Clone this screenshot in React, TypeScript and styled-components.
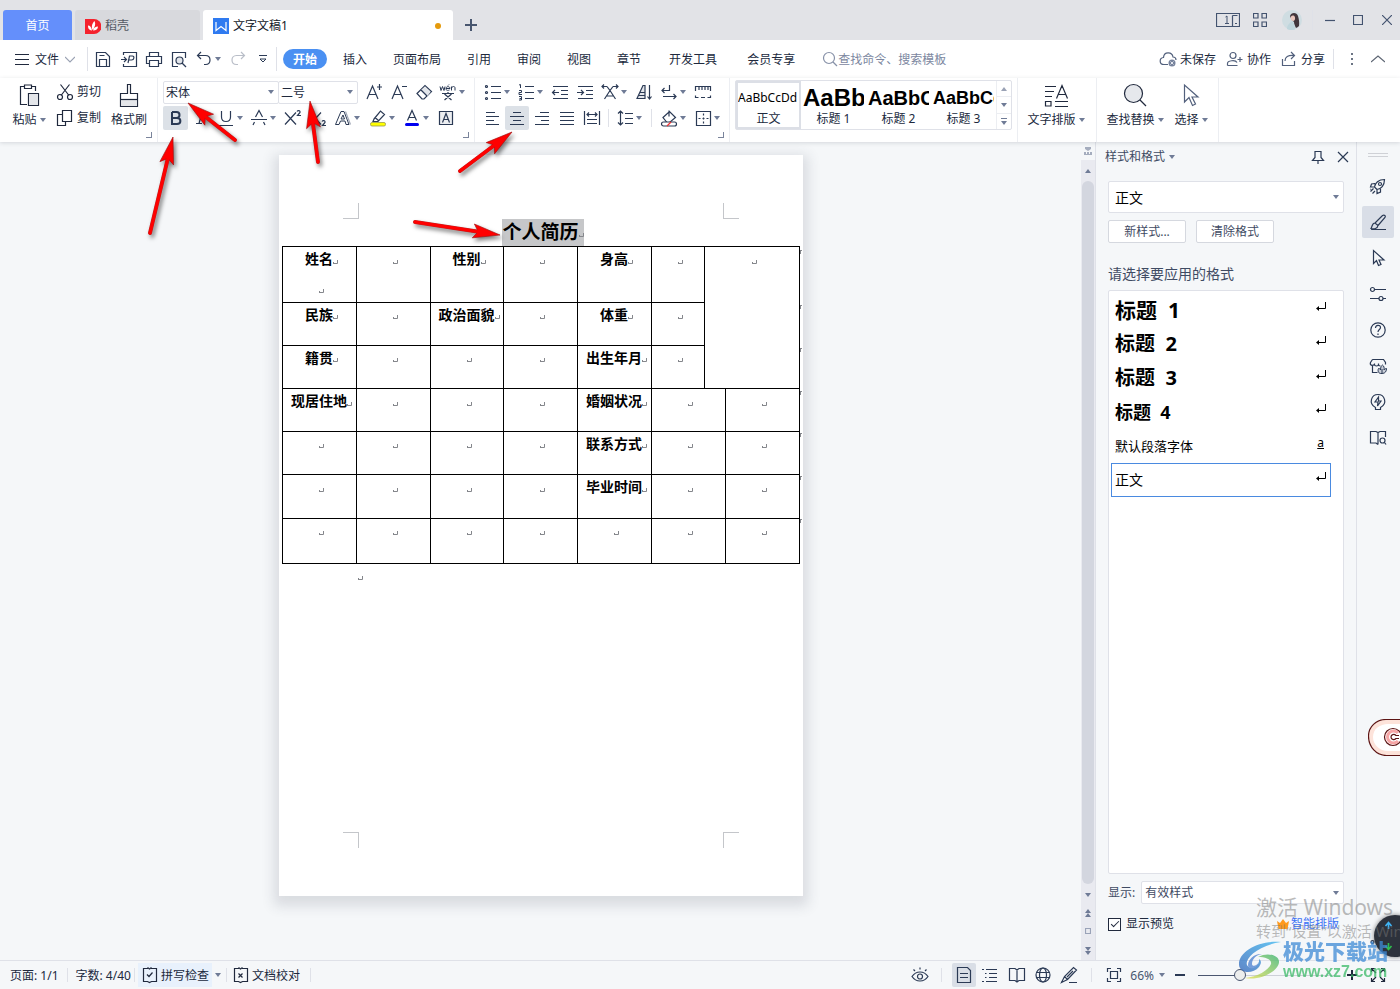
import React from "react";
import styled, { createGlobalStyle, css } from "styled-components";

const sans = `"Noto Sans", "Noto Sans CJK SC", sans-serif`;
const ink = "#2b3a55";
const line = "#dfe1e8";

const GlobalStyle = createGlobalStyle`
  *, *::before, *::after { box-sizing: border-box; }
  body { margin: 0; font-family: ${sans}; font-size: 12px; line-height: 16px; color: #20293d; background: #f5f7f9; }
  button, input, select { font: inherit; color: inherit; }
  button { border: 0; padding: 0; background: none; }
  p, h1, h2 { margin: 0; font-weight: inherit; font-size: inherit; }
  ul { margin: 0; padding: 0; list-style: none; }
`;

/* ---------- shared parts ---------- */

const Svg = styled.svg`
  display: block;
  flex: none;
  fill: none;
  stroke: currentColor;
  stroke-width: 1.2;
`;

function Icon({ size = 18, children }: { size?: number; children: React.ReactNode }) {
  return (
    <Svg width={size} height={size} viewBox={`0 0 ${size} ${size}`} aria-hidden>
      {children}
    </Svg>
  );
}

const CaretSvg = styled.svg`
  display: block;
  flex: none;
  fill: #6f7b96;
`;

function Caret() {
  return (
    <CaretSvg width="6" height="4" viewBox="0 0 6 4" aria-hidden>
      <path d="M0 0h6L3 4z" />
    </CaretSvg>
  );
}

const Divider = styled.span<{ $h: number; $mx?: number }>`
  flex: none;
  width: 1px;
  height: ${(p) => p.$h}px;
  margin: 0 ${(p) => p.$mx ?? 0}px;
  background: ${line};
`;

const Spacer = styled.div`
  flex: 1;
`;

const GapBox = styled.span<{ $w: number }>`
  flex: none;
  width: ${(p) => p.$w}px;
`;

/* ---------- window frame ---------- */

const Window = styled.div`
  position: relative;
  display: flex;
  flex-direction: column;
  min-height: 100vh;
  overflow: hidden;
`;

const TitleBar = styled.header`
  display: flex;
  align-items: flex-end;
  gap: 3px;
  height: 40px;
  padding-left: 3px;
  background: #e2e3e7;
`;

const FileTab = styled.button<{ $w: number; $kind: "home" | "idle" | "active" }>`
  display: flex;
  align-items: center;
  gap: 4px;
  width: ${(p) => p.$w}px;
  height: 30px;
  padding: 2px 12px 0 10px;
  border-radius: 3px 3px 0 0;
  ${(p) =>
    p.$kind === "home"
      ? css`justify-content: center; padding: 2px 0 0; background: #648ffb; color: #fff;`
      : p.$kind === "idle"
        ? css`background: #d8d9dd; color: #555a64;`
        : css`background: #fff; color: #111827;`}
`;

const UnsavedDot = styled.span`
  width: 6px;
  height: 6px;
  margin-left: auto;
  border-radius: 50%;
  background: #e59a0c;
`;

const NewTab = styled.button`
  display: grid;
  place-items: center;
  width: 30px;
  height: 30px;
  color: #48566f;
`;

const WindowTools = styled.div`
  display: flex;
  align-items: center;
  align-self: flex-start;
  height: 40px;
  margin-left: auto;
  color: #43536f;
`;

const WindowButton = styled.button<{ $w: number }>`
  display: grid;
  place-items: center;
  width: ${(p) => p.$w}px;
  height: 40px;
`;

/* ---------- menu row ---------- */

const MenuBar = styled.nav`
  display: flex;
  align-items: center;
  height: 38px;
  padding: 0 9px 0 15px;
  background: #fff;
`;

const FileMenu = styled.button`
  display: flex;
  align-items: center;
  gap: 6px;
  width: 70px;
`;

const MenuText = styled.span`
  padding-top: 2px;
`;

const QuickButton = styled.button<{ $w: number; $dim?: boolean }>`
  display: flex;
  align-items: center;
  justify-content: center;
  gap: 2px;
  width: ${(p) => p.$w}px;
  height: 24px;
  color: ${(p) => (p.$dim ? "#b9bec8" : ink)};
`;

const MenuTab = styled.button<{ $active?: boolean; $pad?: number }>`
  height: 20px;
  padding: 2px ${(p) => p.$pad ?? 13}px 0;
  border-radius: 10px;
  white-space: nowrap;
  ${(p) =>
    p.$active &&
    css`margin: 0 3px 0 6px; padding: 2px 10px 0; background: #4a90f2; color: #fff; font-weight: 700;`}
`;

const Search = styled.label`
  display: flex;
  align-items: center;
  width: 160px;
  margin-left: 12px;
  color: #8791a8;
`;

const SearchInput = styled.input`
  width: 140px;
  padding: 2px 0 0;
  border: 0;
  outline: 0;
  background: none;
  &::placeholder { color: #7c87a0; opacity: 1; }
`;

const CloudAction = styled.button<{ $ml?: number }>`
  display: flex;
  align-items: center;
  gap: 3px;
  margin-left: ${(p) => p.$ml ?? 0}px;
  white-space: nowrap;
  svg { color: #52607c; }
`;

/* ---------- ribbon ---------- */

const Ribbon = styled.section`
  position: relative;
  z-index: 2;
  display: flex;
  height: 64px;
  background: #fff;
  box-shadow: 0 1px 4px rgba(60, 70, 90, 0.18);
`;

const Group = styled.div<{ $w?: number; $pl?: number }>`
  position: relative;
  display: flex;
  flex: none;
  width: ${(p) => (p.$w ? `${p.$w}px` : "auto")};
  padding: 2px 0 0 ${(p) => p.$pl ?? 5}px;
  border-right: 1px solid #eceef2;
`;

const Launcher = styled.button`
  position: absolute;
  right: 5px;
  bottom: 4px;
  width: 6px;
  height: 6px;
  border: solid #7a849b;
  border-width: 0 1px 1px 0;
`;

const BigTool = styled.button<{ $w: number }>`
  display: flex;
  flex-direction: column;
  align-items: center;
  width: ${(p) => p.$w}px;
  padding-top: 2px;
  white-space: nowrap;
  color: #20293d;
`;

const BigLabel = styled.span`
  display: flex;
  align-items: center;
  gap: 3px;
  margin-top: 4px;
`;

const Rows = styled.div`
  display: flex;
  flex-direction: column;
  gap: 2px;
`;

const Row = styled.div`
  display: flex;
  align-items: center;
  height: 24px;
`;

const LabelTool = styled.button`
  display: flex;
  align-items: center;
  gap: 3px;
  height: 24px;
  white-space: nowrap;
`;

const LabelIcon = styled.span`
  display: block;
  margin-left: 10px;
`;

const Tool = styled.button<{ $w: number; $active?: boolean }>`
  display: flex;
  flex: none;
  align-items: center;
  justify-content: center;
  gap: 2px;
  width: ${(p) => p.$w}px;
  height: 24px;
  border-radius: 2px;
  color: ${ink};
  background: ${(p) => (p.$active ? "#dce1e7" : "none")};
`;

const SelectBox = styled.span<{ $w?: number; $h: number }>`
  position: relative;
  display: block;
  flex: ${(p) => (p.$w ? "none" : 1)};
  width: ${(p) => (p.$w ? `${p.$w}px` : "auto")};
  height: ${(p) => p.$h}px;
  & + & { margin-left: -1px; }
  svg { position: absolute; top: 50%; right: 5px; margin-top: -2px; pointer-events: none; }
`;

const Select = styled.select<{ $size?: number; $pl?: number }>`
  width: 100%;
  height: 100%;
  padding: 1px 16px 0 ${(p) => p.$pl ?? 2}px;
  border: 1px solid ${line};
  border-radius: 2px;
  outline: 0;
  appearance: none;
  background: #fff;
  font-size: ${(p) => p.$size ?? 12}px;
`;

const Gallery = styled.div`
  display: flex;
  height: 50px;
  border: 1px solid ${line};
  border-radius: 2px;
`;

const StyleCard = styled.button<{ $active?: boolean }>`
  display: flex;
  flex-direction: column;
  align-items: center;
  width: 65px;
  height: 48px;
  border: 2px solid ${(p) => (p.$active ? "#dcdfe6" : "transparent")};
`;

const Sample = styled.span<{ $size: number; $bold?: boolean; $arial?: boolean }>`
  width: 61px;
  height: 29px;
  overflow: hidden;
  text-align: left;
  white-space: nowrap;
  line-height: 30px;
  color: #000;
  font-family: ${(p) => (p.$arial ? `"Liberation Sans", sans-serif` : sans)};
  font-size: ${(p) => p.$size}px;
  font-weight: ${(p) => (p.$bold ? 700 : 400)};
`;

const GalleryScroll = styled.div`
  display: flex;
  flex-direction: column;
  width: 15px;
  border-left: 1px solid #eceef2;
`;

const GalleryStep = styled.button`
  display: grid;
  flex: 1;
  place-items: center;
  & + & { border-top: 1px solid #eceef2; }
`;

/* ---------- workspace ---------- */

const Workspace = styled.main`
  display: flex;
  flex: 1;
`;

const Canvas = styled.div`
  display: flex;
  flex: 1;
  justify-content: center;
  align-items: flex-start;
  padding: 13px 0 64px;
`;

const Page = styled.article`
  display: flex;
  flex-direction: column;
  width: 524px;
  aspect-ratio: 524 / 741;
  padding: 48px 0;
  background: #fff;
  box-shadow: 0 5px 12px 5px rgba(50, 60, 80, 0.14);
`;

const CropRow = styled.div`
  display: flex;
  flex: none;
  justify-content: space-between;
  padding: 0 64px;
`;

const Crop = styled.span<{ $top?: boolean; $left?: boolean }>`
  width: 16px;
  height: 16px;
  border: 0 solid #c4c6ca;
  border-${(p) => (p.$top ? "bottom" : "top")}-width: 1px;
  border-${(p) => (p.$left ? "right" : "left")}-width: 1px;
`;

const DocTitle = styled.h1`
  display: flex;
  align-items: center;
  align-self: center;
  height: 27px;
  margin-left: 5px;
  background: #c6c7c9;
  color: #000;
  font-size: 19px;
  font-weight: 600;
  line-height: 27px;
  white-space: nowrap;
`;

const TableRow = styled.div`
  display: flex;
  padding: 0 0 0 3px;
`;

const Resume = styled.table`
  flex: none;
  width: 518px;
  border-collapse: collapse;
  table-layout: fixed;
  color: #000;
  font-size: 14px;
  font-weight: 700;
  line-height: 24px;
`;

const Cell = styled.td`
  padding: 0;
  border: 1px solid #000;
  vertical-align: top;
  text-align: center;
  white-space: nowrap;
`;

const CellLine = styled.p`
  display: flex;
  align-items: center;
  justify-content: center;
  height: 24px;
  padding-left: 5px;
  & + & { margin-top: 5px; }
`;

const MarkSvg = styled.svg`
  display: block;
  flex: none;
  margin-top: 6px;
  fill: none;
  stroke: #85878c;
`;

const RowEnds = styled.div`
  flex: 1;
  padding-top: 4px;
  overflow: hidden;
`;

const RowEnd = styled.span<{ $h: number }>`
  display: block;
  height: ${(p) => p.$h}px;
  &::before { content: ""; display: block; width: 2px; height: 4px; border: solid #85878c; border-width: 1px 0 0 1px; }
`;

const AfterTable = styled.p`
  height: 20px;
  padding: 6px 0 0 79px;
`;

const ScrollColumn = styled.div`
  display: flex;
  flex-direction: column;
  align-items: center;
  width: 14px;
  color: #9aa3b8;
`;

const RulerToggle = styled.button`
  display: grid;
  place-items: center;
  width: 14px;
  height: 18px;
`;

const Track = styled.div`
  display: flex;
  flex: 1;
  flex-direction: column;
  align-items: center;
  width: 14px;
  background: #e9eaf0;
`;

const TrackButton = styled.button<{ $h: number }>`
  display: grid;
  place-items: center;
  width: 14px;
  height: ${(p) => p.$h}px;
`;

const Thumb = styled.div`
  flex: 1;
  width: 12px;
  border-radius: 6px;
  background: #d3d6df;
`;

/* ---------- styles panel ---------- */

const Panel = styled.aside`
  display: flex;
  flex-direction: column;
  width: 262px;
  padding: 0 12px;
  border: solid ${line};
  border-width: 0 1px;
  color: #3f4b63;
`;

const PanelHead = styled.div`
  display: flex;
  align-items: center;
  height: 30px;
  margin: 0 -5px 0 -3px;
  gap: 4px;
`;

const PanelButton = styled.button<{ $ml: string }>`
  margin-left: ${(p) => p.$ml};
  color: ${ink};
`;

const PanelSelect = styled.div`
  display: flex;
  margin-top: 9px;
  color: #000;
`;

const ButtonRow = styled.div`
  display: flex;
  gap: 10px;
  margin-top: 7px;
`;

const PlainButton = styled.button`
  width: 78px;
  height: 23px;
  padding-top: 1px;
  border: 1px solid #d5d8df;
  border-radius: 2px;
  background: #fff;
`;

const Prompt = styled.h2`
  margin-top: 21px;
  font-size: 14px;
  line-height: 20px;
`;

const StyleList = styled.ul`
  flex: 1;
  margin-top: 6px;
  padding: 2px 12px 2px 2px;
  border: 1px solid ${line};
  border-radius: 2px;
  background: #fff;
  color: #000;
`;

const StyleItem = styled.li<{ $size: number; $bold?: boolean; $selected?: boolean }>`
  display: flex;
  justify-content: space-between;
  height: 34px;
  padding: 0 4px 0 3px;
  border: 1px solid ${(p) => (p.$selected ? "#4a8ae0" : "transparent")};
  font-size: ${(p) => p.$size}px;
  font-weight: ${(p) => (p.$bold ? 700 : 400)};
  line-height: 32px;
  white-space: pre;
`;

const ItemMark = styled.span`
  padding: 8px 0 0;
`;

const CharMark = styled.span`
  padding-right: 2px;
  font-size: 12px;
  line-height: 26px;
  text-decoration: underline;
`;

const ShowRow = styled.label`
  display: flex;
  align-items: center;
  gap: 6px;
  margin-top: 7px;
  white-space: nowrap;
`;

const PreviewRow = styled.div`
  display: flex;
  align-items: center;
  justify-content: space-between;
  height: 20px;
  margin: 10px 0 26px;
`;

const CheckLabel = styled.label`
  display: flex;
  align-items: center;
  gap: 5px;
  color: #20293d;
`;

const CheckBox = styled.input`
  display: grid;
  place-items: center;
  width: 13px;
  height: 13px;
  margin: 0;
  border: 1px solid #20293d;
  appearance: none;
  background: #fff;
  &:checked::before { content: ""; width: 8px; height: 4px; border: solid #20293d; border-width: 0 0 1px 1px; transform: translateY(-1px) rotate(-45deg); }
`;

const SmartLink = styled.a`
  display: flex;
  align-items: center;
  gap: 2px;
  margin-right: 5px;
  color: #3c72f5;
  text-decoration: none;
`;

const Rail = styled.aside`
  display: flex;
  flex-direction: column;
  align-items: center;
  width: 43px;
  padding: 11px 2px 0 0;
`;

const Grip = styled.span`
  width: 20px;
  height: 4px;
  margin-bottom: 13px;
  border: solid #cfd1d6;
  border-width: 1px 0;
`;

const RailButton = styled.button<{ $active?: boolean }>`
  display: grid;
  place-items: center;
  width: 32px;
  height: 32px;
  margin-bottom: 4px;
  border-radius: 2px;
  color: ${ink};
  background: ${(p) => (p.$active ? "#d9dee7" : "none")};
`;

const RailMore = styled.button`
  margin: auto 0 10px;
  color: ${ink};
`;

/* ---------- status bar ---------- */

const StatusBar = styled.footer`
  display: flex;
  align-items: center;
  height: 29px;
  padding: 0 14px 0 10px;
  border-top: 1px solid ${line};
  color: #20293d;
  white-space: nowrap;
`;

const StatusText = styled.span`
  padding-top: 2px;
`;

const StatusButton = styled.button<{ $tint?: boolean }>`
  display: flex;
  align-items: center;
  gap: 2px;
  height: 24px;
  padding: 0 3px;
  background: ${(p) => (p.$tint ? "#e8f1fc" : "none")};
`;

const ZoomValue = styled.span`
  margin-right: 3px;
  padding-top: 1px;
  color: #48566f;
`;

const ViewButton = styled.button<{ $active?: boolean; $w: number }>`
  display: grid;
  place-items: center;
  width: ${(p) => p.$w}px;
  height: 24px;
  border-radius: 2px;
  color: ${ink};
  background: ${(p) => (p.$active ? "#d9dee6" : "none")};
`;

const Zoom = styled.input`
  width: 137px;
  height: 14px;
  margin: 0 12px 0 6px;
  appearance: none;
  background: linear-gradient(to right, #4a5670 32%, #cdd0d8 32%) center / 100% 1px no-repeat;
  &::-webkit-slider-thumb { width: 12px; height: 12px; appearance: none; border: 1px solid #4a5670; border-radius: 50%; background: #eceded; }
`;

/* ---------- floating layers ---------- */

const ArrowLayer = styled.svg`
  position: absolute;
  z-index: 5;
  top: 0;
  left: 0;
  pointer-events: none;
  filter: drop-shadow(2px 3px 2px rgba(0, 0, 0, 0.5));
`;

const Activation = styled.div`
  position: absolute;
  z-index: 6;
  right: 0;
  bottom: 48px;
  width: 144px;
  overflow: hidden;
  color: rgba(120, 120, 120, 0.5);
  font-size: 15px;
  line-height: 20px;
  white-space: nowrap;
  pointer-events: none;
`;

const ActivationTitle = styled.p`
  font-size: 21px;
  line-height: 28px;
`;

const SiteMark = styled.div`
  position: absolute;
  z-index: 6;
  right: 12px;
  bottom: 8px;
  display: flex;
  align-items: center;
  gap: 1px;
  opacity: 0.75;
  pointer-events: none;
`;

const SiteName = styled.p`
  color: #3d8ad6;
  font-size: 21px;
  font-weight: 900;
  line-height: 24px;
  white-space: nowrap;
`;

const SiteUrl = styled.p`
  color: #3cba68;
  font-family: "Liberation Sans", sans-serif;
  font-size: 16px;
  font-weight: 700;
  line-height: 18px;
`;

const SideBadge = styled.button`
  position: absolute;
  z-index: 4;
  top: 719px;
  right: 0;
  width: 32px;
  height: 37px;
`;

const NetBall = styled.button`
  position: absolute;
  z-index: 5;
  right: -16px;
  bottom: 32px;
  width: 42px;
  height: 42px;
  border-radius: 50%;
  background: #2d323c;
  box-shadow: 0 0 5px rgba(0, 0, 0, 0.5);
`;

/* ---------- drawn pieces ---------- */

function ParaMark() {
  return (
    <MarkSvg width="5" height="5" viewBox="0 0 5 5" aria-hidden>
      <path d="M4.500 0v3.500H.500M.500 2v2" />
    </MarkSvg>
  );
}

function EnterMark() {
  return (
    <Svg width="10" height="9" viewBox="0 0 10 9" aria-hidden>
      <path d="M9.500 0v6.500H2" strokeWidth="1" />
      <path d="M0 6.500 3 4v5z" fill="currentColor" stroke="none" />
    </Svg>
  );
}

function Arrow({ tip, tail }: { tip: [number, number]; tail: [number, number] }) {
  const dx = tail[0] - tip[0];
  const dy = tail[1] - tip[1];
  const angle = (Math.atan2(dy, dx) * 180) / Math.PI;
  const length = Math.hypot(dx, dy);
  return (
    <g transform={`translate(${tip[0]} ${tip[1]}) rotate(${angle})`}>
      <path d={`M20 0H${length}`} stroke="#c02020" strokeWidth="4" strokeLinecap="round" />
      <path d="M0 0 27 -7 22 0 27 7z" fill="#f00" stroke="#a01010" strokeWidth=".6" />
      <path d={`M20 0H${length}`} stroke="#f00" strokeWidth="3" strokeLinecap="round" />
    </g>
  );
}

const bullets = (
  <>
    <path d="M7 3.500h10M7 9.500h10M7 15.500h10" />
    <circle cx="2.500" cy="3.500" r="1" />
    <circle cx="2.500" cy="9.500" r="1" />
    <circle cx="2.500" cy="15.500" r="1" />
  </>
);
const numbers = (
  <>
    <path d="M8 3.500h9M8 9.500h9M8 15.500h9" />
    <path d="M2 2l1.500-.5V5M2 7.500h2.500v2H2v2h3M2 13.500h2.500v3.500H2M2.500 15.500h2" strokeWidth="1" />
  </>
);

const bookFrame = <path d="M7 2.500H2.500v13h4l2 1 2-1h5v-13H10M6.500 1.500l2 1.500 2-1.500" />;

const quick = [
  { label: "保存", w: 26, icon: <><path d="M2.500 2.500h9l4 4v10h-13z" /><path d="M5.500 16V9.500h7V16M5.500 5.500h5" /></> },
  { label: "输出为PDF", w: 25, icon: <><path d="M3.500 5V2.500h13v14h-13V14" /><path d="M1 9.500h5M4 7l2.500 2.500L4 12M8 13l1.500-7h3c2 0 2 4-1 4H9" /></> },
  { label: "打印", w: 25, icon: <><path d="M4.500 6V2.500h9V6M4.500 13.500h-3v-7h15v7h-3" /><path d="M4.500 10.500h9v6h-9z" /></> },
  { label: "打印预览", w: 25, icon: <><path d="M8 16.500H2.500v-14h13V8" /><circle cx="9.500" cy="10.500" r="3.500" fill="#e2e5ea" /><path d="M12 13l4 4" /></> },
];

const columns = [74, 74, 73, 74, 74, 53, 21, 74];
const rowHeights = [55, 43, 43, 42, 43, 43, 45];
const rows: string[][] = [
  ["姓名", "", "性别", "", "身高", "", ""],
  ["民族", "", "政治面貌", "", "体重", ""],
  ["籍贯", "", "", "", "出生年月", ""],
  ["现居住地", "", "", "", "婚姻状况", "", ""],
  ["", "", "", "", "联系方式", "", ""],
  ["", "", "", "", "毕业时间", "", ""],
  ["", "", "", "", "", "", ""],
];

const rail = [
  { label: "快速启动", icon: <><path d="M5.500 10C6 6 9.500 2.500 15.500 2.500 15.500 8.500 12 12 8 12.500zM6 6.500l-3.500.5L1.500 10l4 0M11.500 12v3L8 16.500v-4" /><circle cx="11" cy="7" r="1.500" /><path d="M4.500 11.500l-3 3M6 14l-2.500 2.500M2 12l-.5.500" /></> },
  { label: "样式和格式", active: true, icon: <><path d="M2 16.500h15M6 10l7.500-7.500c2-1 3.500.5 2.500 2L9 12.500M6 10c-3 0-2.500 3-4 5.500C5 16 8.500 16 9 12.500z" /></> },
  { label: "选择窗格", icon: <path d="M4.500 1.500v13l3-3 2 5 2.500-1-2-4.500H15z" /> },
  { label: "属性", icon: <><circle cx="3.500" cy="4.500" r="2" /><path d="M5.500 4.500H17M1 13.500h9M14 13.500h3" /><circle cx="12" cy="13.500" r="2" /></> },
  { label: "帮助", icon: <><circle cx="9" cy="9" r="7.200" /><path d="M6.500 7c0-3.500 5-3.500 5-.5 0 2-2.500 2-2.500 4.500M9 12.500V14" /></> },
  { label: "稻壳资源", icon: <><path d="M3.500 9v6.500h5M3.500 2.500h11l2 3v2M3.500 2.500l-2 3c-1 3 2 3.500 4 2V6.500M5.500 7.500c0 2 4 2 4 0v-1M9.500 7.500c0 1 1 1.500 2 1.500" /><path d="M13 16.500c-4 .5-4.500-3-3.500-5 1 0 2 .5 2 1.500 0-3 1-4.500 2-5 1.500 1 2 3 1.500 5 .5-1 1.500-1.500 2.500-1.500 0 2.500-1 5-4.500 5zM13 16V12" fill="#c9ced8" strokeWidth="1" /></> },
  { label: "灵感", icon: <><path d="M6.500 14.500C-1 10 2.500 1.500 9 1.500s10 8.500 2.500 13v2h-5z" /><path d="M9.500 4l-3.500 5h3l-.5 4L12 8H9.500z" /></> },
  { label: "查阅", icon: <><path d="M9 15.500l-2-1.500H1.500V2.500H7l2 1 2-1h5.500V8M9 3.500v12" /><circle cx="13.500" cy="11.500" r="2.500" /><path d="M15.500 13.500l1.500 2" /></> },
];

/* ---------- sections ---------- */

function Title() {
  return (
    <TitleBar>
      <FileTab $kind="home" $w={69}>首页</FileTab>
      <FileTab $kind="idle" $w={125}>
        <Icon size={16}>
          <path d="M0 1h9a7 7 0 0 1 0 15H0z" fill="#f5222d" stroke="none" />
          <path d="M7 12.500C3 12 3 9 3 7.500c2 0 3.500 1.500 4 5zM7.500 12C6 8 7.500 5 9.500 3c1.500 3 .5 6-2 9zM8 12.500c.5-3 2.500-4 5-4 0 2.500-2 4-5 4z" fill="#fff" stroke="none" />
        </Icon>
        稻壳
      </FileTab>
      <FileTab $kind="active" $w={250}>
        <Icon size={16}>
          <rect width="16" height="16" fill="#2f7af0" stroke="none" />
          <path d="M3 4v8.500l5-4 5 4V4" stroke="#fff" strokeWidth="1.200" />
        </Icon>
        文字文稿1
        <UnsavedDot />
      </FileTab>
      <NewTab aria-label="新建">
        <Icon size={12}><path d="M6 0v12M0 6h12" strokeWidth="2" /></Icon>
      </NewTab>
      <WindowTools>
        <WindowButton $w={32} aria-label="窗口切换">
          <Svg width="24" height="14" viewBox="0 0 24 14" aria-hidden>
            <path d="M.500 .500h23v13H.500zM16.500 2.500v11M16.500 2.500h5" />
            <path d="M9.500 4l1.500-1v8M9 10.500h4M19 10.500h2" strokeWidth="1" />
          </Svg>
        </WindowButton>
        <WindowButton $w={32} aria-label="应用">
          <Icon size={14}><path d="M.500 .500h4.500v4.500H.500zM9 .500h4.500v4.500H9zM.500 9h4.500v4.500H.500zM9 9h4.500v4.500H9z" /></Icon>
        </WindowButton>
        <WindowButton $w={32} aria-label="账户">
          <Icon size={20}>
            <circle cx="10" cy="10" r="10" fill="#cfdde2" stroke="none" />
            <path d="M8 6c1-4 7-4 8 0 1 3 1.500 7 1 10-1 1-2 1.500-3 2-1-2-2-4-2-6-2-1-3-3-4-6z" fill="#40363c" stroke="none" />
            <path d="M9 6.500c1-1.500 3.500-1.500 4 1s-1 4-2.500 3.500S8 8.500 9 6.500z" fill="#e7c6bd" stroke="none" />
            <path d="M5 19c0-4 3-7 6-8 1 3 2 6 2 8.500-3 1-6 .5-8-.5z" fill="#bfd6dd" stroke="none" />
          </Icon>
        </WindowButton>
        <Divider $h={20} $mx={4} />
        <WindowButton $w={26} aria-label="最小化"><Icon size={10}><path d="M0 5.500h10" /></Icon></WindowButton>
        <WindowButton $w={30} aria-label="最大化"><Icon size={10}><path d="M.500 .500h9v9h-9z" /></Icon></WindowButton>
        <WindowButton $w={27} aria-label="关闭"><Icon size={10}><path d="M0 0l10 10M10 0L0 10" /></Icon></WindowButton>
      </WindowTools>
    </TitleBar>
  );
}

function Menu() {
  return (
    <MenuBar>
      <FileMenu>
        <Icon size={14}><path d="M0 2.500h14M0 7.500h14M0 12.500h14" strokeWidth="1" /></Icon>
        <MenuText>文件</MenuText>
        <Icon size={10}><path d="M0 3l5 5 5-5" stroke="#9aa2b3" /></Icon>
      </FileMenu>
      <Divider $h={24} $mx={2} />
      {quick.map((q) => (
        <QuickButton key={q.label} $w={q.w} aria-label={q.label}><Icon>{q.icon}</Icon></QuickButton>
      ))}
      <QuickButton $w={34} aria-label="撤销">
        <Icon><path d="M6 2L2.500 5.500 6 9M2.500 5.500h8c6 0 6 9 0 9H9" /></Icon>
        <Caret />
      </QuickButton>
      <QuickButton $w={26} $dim aria-label="恢复">
        <Icon><path d="M12 2l3.500 3.500L12 9M15.500 5.500h-8c-6 0-6 9 0 9H9" /></Icon>
      </QuickButton>
      <QuickButton $w={24} aria-label="更多">
        <Icon size={8}><path d="M0 .500h8M1 4l3 3 3-3z" strokeWidth="1" /></Icon>
      </QuickButton>
      <GapBox $w={1} />
      <Divider $h={24} />
      <MenuTab $active>开始</MenuTab>
      {["插入", "页面布局", "引用", "审阅", "视图", "章节"].map((t) => <MenuTab key={t}>{t}</MenuTab>)}
      {["开发工具", "会员专享"].map((t) => <MenuTab key={t} $pad={15}>{t}</MenuTab>)}
      <Search>
        <Icon size={16}><circle cx="7" cy="7" r="5.500" /><path d="M11 11l4 4" /></Icon>
        <SearchInput type="search" aria-label="查找命令" placeholder="查找命令、搜索模板" />
      </Search>
      <Spacer />
      <CloudAction>
        <Icon><path d="M9 14.500H5c-5 0-5-6.500-.5-7C5 1.500 13 1.500 14 7c2 0 3 1.500 3 3" /><circle cx="13" cy="13" r="3.500" fill="#76829c" stroke="none" /><path d="M11.500 11.500l3 3M14.500 11.500l-3 3" stroke="#fff" strokeWidth=".8" /></Icon>
        <MenuText>未保存</MenuText>
      </CloudAction>
      <CloudAction $ml={10}>
        <Icon><circle cx="7" cy="5.500" r="3" /><path d="M1.500 15.500v-2c0-3 8-4 9.500-1M1.500 15.500h10M11.500 9.500h5M14 7v5" /></Icon>
        <MenuText>协作</MenuText>
      </CloudAction>
      <CloudAction $ml={9}>
        <Icon><path d="M2.500 9v6.500h12V11M5 11c0-4 3-6 9-5.500M11 2l3.500 3.500L11 9" /></Icon>
        <MenuText>分享</MenuText>
      </CloudAction>
      <Divider $h={20} $mx={8} />
      <QuickButton $w={20} aria-label="更多操作">
        <Icon size={14}><path d="M7 1v2M7 6v2M7 11v2" stroke="#6b7484" strokeWidth="2" /></Icon>
      </QuickButton>
      <GapBox $w={3} />
      <QuickButton $w={26} aria-label="收起功能区">
        <Icon size={14}><path d="M0 10l7-6 7 6" stroke="#5d6573" /></Icon>
      </QuickButton>
    </MenuBar>
  );
}

function RibbonBar() {
  return (
    <Ribbon>
      <Group $w={158} $pl={12}>
        <BigTool $w={34}>
          <Icon size={26}><path d="M11 22.500H4.500v-18h4M16 4.500h3.500V9M8.500 3h7v3.500h-7zM12.500 11.500h10v12h-10z" /><path d="M13 12h9v11h-9z" fill="#e4e6ea" stroke="none" /></Icon>
          <BigLabel>粘贴<Caret /></BigLabel>
        </BigTool>
        <Rows>
          <LabelTool>
            <LabelIcon><Icon><path d="M4.500 1.500l8.500 11M13.500 1.500L5 12.500" /><circle cx="4" cy="14" r="2.500" /><circle cx="14" cy="14" r="2.500" /></Icon></LabelIcon>
            剪切
          </LabelTool>
          <LabelTool>
            <LabelIcon><Icon><path d="M6 5.500H1.500v11h8V13M6.500 1.500h9v11h-9z" /></Icon></LabelIcon>
            复制
          </LabelTool>
        </Rows>
        <BigTool $w={56}>
          <Icon size={26}><path d="M11.500 2.500h3v9h7v13h-17v-13h7z" /><path d="M5 17.500h16V24H5z" fill="#e4e6ea" stroke="none" /><path d="M4.500 17.500h17" /></Icon>
          <BigLabel>格式刷</BigLabel>
        </BigTool>
        <Launcher aria-label="剪贴板设置" />
      </Group>

      <Group $w={317}>
        <Rows>
          <Row>
            <SelectBox $w={116} $h={23}><Select aria-label="字体"><option>宋体</option></Select><Caret /></SelectBox>
            <SelectBox $w={80} $h={23}><Select aria-label="字号"><option>二号</option></Select><Caret /></SelectBox>
            <GapBox $w={3} />
            <Tool $w={25} aria-label="增大字号"><Icon><path d="M2 16L7.500 3 13 16M4 11.500h7M14.500 1v6M12 4h5" /></Icon></Tool>
            <Tool $w={25} aria-label="减小字号"><Icon><path d="M2 16L7.500 3 13 16M4 11.500h7M12 3.500h5" /></Icon></Tool>
            <Tool $w={25} aria-label="清除格式"><Icon><path d="M2 10.500L10 2.500l6.500 6-7.500 7.500H7z" /><path d="M6 7l6.500 6 3-4L10 3.500z" fill="#e2e5ea" stroke="none" /><path d="M6 7l6 6" /></Icon></Tool>
            <Tool $w={32} aria-label="拼音指南">
              <Icon><path d="M1 3.500l1 4 1.500-4 1.500 4 1-4M7 5.500h4c0-2.500-4-2.500-4 0s2 2 3.500 1.500M10 1.500L9 2.500M12.500 7.500v-4M12.500 5c1-2 3.500-2 3.500 0v2.500" strokeWidth="1" /><path d="M3 10.500h12M9 9v1.500M5.500 11l7 6M12.500 11l-7 6" /></Icon>
              <Caret />
            </Tool>
          </Row>
          <Row>
            <Tool $w={25} $active aria-label="加粗"><Icon><path d="M5 3v12h5c4.500 0 4.500-6 0-6H5.500M5 3h4.500c4 0 4 6 0 6" strokeWidth="2" /></Icon></Tool>
            <Tool $w={26} aria-label="倾斜"><Icon><path d="M7 3.500h6M4 14.500h6M10 3.500l-3 11" /></Icon></Tool>
            <Tool $w={32} aria-label="下划线"><Icon><path d="M4.500 2v6c0 6 9 6 9 0V2M2 16.500h14" /></Icon><Caret /></Tool>
            <Tool $w={34} aria-label="删除线"><Icon><path d="M5.500 8L9 1.500 12.500 8M1 10.500h16M4.500 13L3 16M13.500 13l1.500 3" /></Icon><Caret /></Tool>
            <Tool $w={26} aria-label="上标"><Icon><path d="M1 3.500l11 12M12 3.500l-11 12" /><path d="M13 2.500c1-1.500 3.500-1 3 1L13.500 6.500h3.500" /></Icon></Tool>
            <Tool $w={24} aria-label="下标"><Icon><path d="M1 3.500l11 12M12 3.500l-11 12" /><path d="M13 12.500c1-1.500 3.500-1 3 1l-2.500 3h3.500" /></Icon></Tool>
            <Tool $w={34} aria-label="文字效果"><Icon><path d="M1.500 15.500L7 2.500h3l5 13h-3L11 12H6.500l-1.500 3.500zM7 10h3.500L9 6z" strokeWidth="1" /><path d="M11.500 2.500l5 13" stroke="#a4abb9" /></Icon><Caret /></Tool>
            <Tool $w={36} aria-label="突出显示"><Icon><path d="M5 10l6.500-8 4 3.500L9 12.500H4zM6 8.500l4 3.500" /><rect x="1.500" y="13.500" width="15" height="3.500" rx="1.500" fill="#ff0" stroke="#9a9a50" strokeWidth=".8" /></Icon><Caret /></Tool>
            <Tool $w={32} aria-label="字体颜色"><Icon><path d="M4.500 11.500L9 1.500l4.500 10M6 8.500h6" /><rect x="2" y="14" width="14" height="3" rx="1.500" fill="#0000f0" stroke="none" /></Icon><Caret /></Tool>
            <Tool $w={28} aria-label="字符底纹"><Icon><path d="M2.500 2.500h13v13h-13z" fill="#eceef1" /><path d="M5.500 13.500L9 4.500l3.500 9M6.500 10.500h5" /></Icon></Tool>
          </Row>
        </Rows>
        <Launcher aria-label="字体设置" />
      </Group>

      <Group $w={255}>
        <Rows>
          <Row>
            <Tool $w={33} aria-label="项目符号"><Icon>{bullets}</Icon><Caret /></Tool>
            <Tool $w={34} aria-label="编号"><Icon>{numbers}</Icon><Caret /></Tool>
            <Tool $w={26} aria-label="减少缩进"><Icon><path d="M2 3.500h15M10 7.500h7M10 11.500h7M2 15.500h15M8 9.500H1.500M4 7L1.500 9.500 4 12" /></Icon></Tool>
            <Tool $w={24} aria-label="增加缩进"><Icon><path d="M2 3.500h15M10 7.500h7M10 11.500h7M2 15.500h15M1 9.500h6.500M5 7l2.500 2.500L5 12" /></Icon></Tool>
            <Tool $w={34} aria-label="中文版式"><Icon><path d="M3.500 16L9 7.500l5.500 8.500M5.500 13h7M1 3.500h5M3 1.500l-2 2 2 2M12 3.500h5M15 1.500l2 2-2 2M6 3.500l3 4 3-4" /></Icon><Caret /></Tool>
            <Tool $w={26} aria-label="排序"><Icon><path d="M2 15.500l6-13h2v13zM5 9.500h5M4 12.500h6" fill="#e2e5ea" /><path d="M14.500 2v14M12.500 13.500l2 2.500 2-2.500" /></Icon></Tool>
            <Tool $w={32} aria-label="显示段落标记"><Icon><path d="M9.500 2v5.500H2M4.500 5L2 7.500 4.500 10M3 13.500h13M13.500 11l2.500 2.500-2.500 2.500" /></Icon><Caret /></Tool>
            <Tool $w={28} aria-label="制表位"><Icon><path d="M1.500 8V3.500h15V8M5 3.500V7M8 3.500V7M11 3.500V7M14 3.500V7M1.500 12.500v2h3M7 14.500h4M13.500 14.500h3v-2" /></Icon></Tool>
          </Row>
          <Row>
            <Tool $w={25} aria-label="左对齐"><Icon><path d="M2 3.500h9M2 7.500h13M2 11.500h8M2 15.500h13" /></Icon></Tool>
            <Tool $w={24} $active aria-label="居中对齐"><Icon><path d="M5 3.500h8M2 7.500h14M5 11.500h8M2 15.500h14" /></Icon></Tool>
            <Tool $w={26} aria-label="右对齐"><Icon><path d="M7 3.500h9M2 7.500h14M8 11.500h8M2 15.500h14" /></Icon></Tool>
            <Tool $w={24} aria-label="两端对齐"><Icon><path d="M2 3.500h14M2 7.500h14M2 11.500h14M2 15.500h14" /></Icon></Tool>
            <Tool $w={26} aria-label="分散对齐"><Icon><path d="M1.500 2v14M16.500 2v14M4 5.500h10M6 3.500l-2 2 2 2M12 3.500l2 2-2 2M4 10.500h10M4 14.500h10" /></Icon></Tool>
            <Divider $h={18} $mx={3} />
            <Tool $w={34} aria-label="行距"><Icon><path d="M4.500 2v14M2 4.500L4.500 2 7 4.500M2 13.500L4.500 16 7 13.500M9 4.500h8M9 9.500h8M9 14.500h8" /></Icon><Caret /></Tool>
            <Divider $h={18} $mx={5} />
            <Tool $w={32} aria-label="底纹颜色"><Icon><path d="M3 8.500L9.500 2.500l6 6-6 5H7zM9 1.500v6" /><rect x="1.500" y="13" width="15" height="4" rx="2" fill="#fff" /><path d="M7 17l4-4" stroke="#e33" /></Icon><Caret /></Tool>
            <Tool $w={36} aria-label="边框"><Icon><path d="M2.500 2.500h14v14h-14z" /><path d="M9.500 4.500v10M4.500 9.500h10" strokeDasharray="2 2" /></Icon><Caret /></Tool>
          </Row>
        </Rows>
        <Launcher aria-label="段落设置" />
      </Group>

      <Group $w={288}>
        <Gallery>
          <StyleCard $active><Sample $size={12}>AaBbCcDd</Sample>正文</StyleCard>
          <StyleCard><Sample $size={24} $bold $arial>AaBbCcDd</Sample>标题 1</StyleCard>
          <StyleCard><Sample $size={20} $bold $arial>AaBbCcDd</Sample>标题 2</StyleCard>
          <StyleCard><Sample $size={18} $bold $arial>AaBbCcDd</Sample>标题 3</StyleCard>
          <GalleryScroll>
            <GalleryStep aria-label="上一行"><CaretSvg width="6" height="4" viewBox="0 0 6 4"><path d="M0 4h6L3 0z" opacity=".7" /></CaretSvg></GalleryStep>
            <GalleryStep aria-label="下一行"><Caret /></GalleryStep>
            <GalleryStep aria-label="展开样式"><CaretSvg width="6" height="7" viewBox="0 0 6 7"><path d="M0 0h6v1H0zM0 3h6L3 7z" /></CaretSvg></GalleryStep>
          </GalleryScroll>
        </Gallery>
      </Group>

      <Group $w={79} $pl={6}>
        <BigTool $w={64}>
          <Icon size={26}><path d="M2 4.500h11M2 9.500h9M2 14.500h7M2.500 19.500h5.500v4.500H2.500zM12 19.500h13M12 24.500h13M13.500 16.500L19 3.500l5.500 13M15.500 12.500h7" /></Icon>
          <BigLabel>文字排版<Caret /></BigLabel>
        </BigTool>
      </Group>

      <Group $w={122} $pl={6}>
        <BigTool $w={64}>
          <Icon size={26}><circle cx="11.500" cy="11.500" r="9" fill="#e6e8ec" /><path d="M18 18l6 6" /></Icon>
          <BigLabel>查找替换<Caret /></BigLabel>
        </BigTool>
        <BigTool $w={48}>
          <Icon size={26}><path d="M6.500 3v17l4.500-4.500 3.500 8 3-1.500-3.500-7H20z" stroke="#52607c" /></Icon>
          <BigLabel>选择<Caret /></BigLabel>
        </BigTool>
      </Group>
    </Ribbon>
  );
}

function Document() {
  return (
    <Canvas>
      <Page>
        <CropRow><Crop $top $left /><Crop $top /></CropRow>
        <DocTitle>个人简历<ParaMark /></DocTitle>
        <TableRow>
          <Resume>
            <colgroup>{columns.map((w, i) => <col key={i} width={w} />)}</colgroup>
            <tbody>
              {rows.map((cells, r) => (
                <tr key={r} style={{ height: rowHeights[r] }}>
                  {cells.map((text, c) => {
                    const photo = r === 0 && c === 6;
                    const wide = photo || (r > 2 && c === 5);
                    return (
                      <Cell key={c} colSpan={wide ? 2 : 1} rowSpan={photo ? 3 : 1}>
                        <CellLine>{text}<ParaMark /></CellLine>
                        {r === 0 && c === 0 && <CellLine><ParaMark /></CellLine>}
                      </Cell>
                    );
                  })}
                </tr>
              ))}
            </tbody>
          </Resume>
          <RowEnds>{rowHeights.map((h, i) => <RowEnd key={i} $h={h} />)}</RowEnds>
        </TableRow>
        <AfterTable><ParaMark /></AfterTable>
        <Spacer />
        <CropRow><Crop $left /><Crop /></CropRow>
      </Page>
    </Canvas>
  );
}

function Scrollbar() {
  return (
    <ScrollColumn>
      <RulerToggle aria-label="标尺"><CaretSvg width="8" height="8" viewBox="0 0 8 8"><path d="M1 0h6v2L4 4 1 2zM0 5h2v3H0zM3 5h2v3H3zM6 5h2v3H6zM0 7h8v1H0z" opacity=".6" /></CaretSvg></RulerToggle>
      <Track>
        <TrackButton $h={21} aria-label="向上"><CaretSvg width="6" height="4" viewBox="0 0 6 4"><path d="M0 4h6L3 0z" /></CaretSvg></TrackButton>
        <Thumb />
        <TrackButton $h={22} aria-label="向下"><Caret /></TrackButton>
        <TrackButton $h={14} aria-label="上一页"><CaretSvg width="6" height="8" viewBox="0 0 6 8"><path d="M0 4h6L3 0zM0 8h6L3 4z" /></CaretSvg></TrackButton>
        <TrackButton $h={22} aria-label="浏览对象"><Icon size={6}><path d="M.500 .500h5v5h-5z" /></Icon></TrackButton>
        <TrackButton $h={18} aria-label="下一页"><CaretSvg width="6" height="8" viewBox="0 0 6 8"><path d="M0 0h6L3 4zM0 4h6L3 8z" /></CaretSvg></TrackButton>
      </Track>
    </ScrollColumn>
  );
}

function StylesPanel() {
  return (
    <Panel>
      <PanelHead>
        样式和格式<Caret />
        <PanelButton $ml="auto" aria-label="固定"><Icon size={14}><path d="M4 1.500h6v6l2.500 3h-11l2.500-3zM7 10.500V14" /></Icon></PanelButton>
        <PanelButton $ml="8px" aria-label="关闭窗格"><Icon size={12}><path d="M1 1l10 10M11 1L1 11" /></Icon></PanelButton>
      </PanelHead>
      <PanelSelect>
        <SelectBox $h={32}><Select aria-label="当前样式" $size={14} $pl={6}><option>正文</option></Select><Caret /></SelectBox>
      </PanelSelect>
      <ButtonRow>
        <PlainButton>新样式...</PlainButton>
        <PlainButton>清除格式</PlainButton>
      </ButtonRow>
      <Prompt>请选择要应用的格式</Prompt>
      <StyleList>
        <StyleItem $size={21} $bold>{"标题  1"}<ItemMark><EnterMark /></ItemMark></StyleItem>
        <StyleItem $size={20} $bold>{"标题  2"}<ItemMark><EnterMark /></ItemMark></StyleItem>
        <StyleItem $size={20} $bold>{"标题  3"}<ItemMark><EnterMark /></ItemMark></StyleItem>
        <StyleItem $size={18} $bold>{"标题  4"}<ItemMark><EnterMark /></ItemMark></StyleItem>
        <StyleItem $size={13}>默认段落字体<CharMark>a</CharMark></StyleItem>
        <StyleItem $size={14} $selected>正文<ItemMark><EnterMark /></ItemMark></StyleItem>
      </StyleList>
      <ShowRow>
        显示:
        <SelectBox $h={23}><Select $pl={3}><option>有效样式</option></Select><Caret /></SelectBox>
      </ShowRow>
      <PreviewRow>
        <CheckLabel><CheckBox type="checkbox" defaultChecked />显示预览</CheckLabel>
        <SmartLink href="#smart">
          <Icon size={12}><path d="M0 3l3 2 3-4 3 4 3-2-1.500 8h-9z" fill="#ff9a1e" stroke="none" /></Icon>
          智能排版
        </SmartLink>
      </PreviewRow>
    </Panel>
  );
}

function Status() {
  return (
    <StatusBar>
      <StatusText>页面: 1/1</StatusText>
      <Divider $h={14} $mx={8} />
      <StatusText>字数: 4/40</StatusText>
      <Divider $h={14} $mx={3} />
      <StatusButton $tint><Icon>{bookFrame}<path d="M6 8.500l2 2 3.500-4" /></Icon><StatusText>拼写检查</StatusText></StatusButton>
      <StatusButton aria-label="拼写选项"><Caret /></StatusButton>
      <Divider $h={14} $mx={2} />
      <StatusButton><Icon>{bookFrame}<path d="M6.500 7.500l4 4M10.500 7.500l-4 4" /></Icon><StatusText>文档校对</StatusText></StatusButton>
      <Divider $h={14} $mx={7} />
      <Spacer />
      <ViewButton $w={30} aria-label="护眼模式"><Icon><path d="M1 10.500c4-6 12-6 16 0-4 6-12 6-16 0zM2.500 3.500L4 5M9 1.500v2M15.500 3.500L14 5" /><circle cx="9" cy="10.500" r="2.500" /></Icon></ViewButton>
      <Divider $h={14} $mx={6} />
      <GapBox $w={4} />
      <ViewButton $w={24} $active aria-label="页面视图"><Icon><path d="M2.500 1.500h10l3 3v12h-13zM5 7.500h8M5 11.500h8" /></Icon></ViewButton>
      <ViewButton $w={28} aria-label="大纲"><Icon><path d="M1 3.500h2M5 3.500h11M4 7.500h1.500M8 7.500h8M4 11.500h1.500M8 11.500h8M1 15.500h2M5 15.500h11" /></Icon></ViewButton>
      <ViewButton $w={26} aria-label="阅读版式"><Icon><path d="M1.500 2.500H7l2 1.500 2-1.500h5.500v12H11L9 16l-2-1.500H1.500zM9 4v12" /></Icon></ViewButton>
      <ViewButton $w={26} aria-label="Web版式"><Icon><circle cx="9" cy="9" r="7" /><ellipse cx="9" cy="9" rx="3.500" ry="7" /><path d="M2.500 6.500h13M2.500 11.500h13" /></Icon></ViewButton>
      <ViewButton $w={26} aria-label="写作模式"><Icon><path d="M1.500 16.500l3-6 9-9 3 2.500-9 9.500zM4.500 10.500l3 3M9 16.500h8M7 11l6-6" /></Icon></ViewButton>
      <Divider $h={14} $mx={9} />
      <ViewButton $w={26} aria-label="最佳显示比例"><Icon size={16}><path d="M1.500 5V1.500H5M11 1.500h3.500V5M14.500 11v3.500H11M5 14.500H1.500V11M4.500 4.500h7v7h-7z" /></Icon></ViewButton>
      <StatusButton><ZoomValue>66%</ZoomValue><Caret /></StatusButton>
      <ViewButton $w={24} aria-label="缩小"><Icon size={10}><path d="M0 5h10" strokeWidth="2" /></Icon></ViewButton>
      <Zoom type="range" min={0} max={100} defaultValue={29} aria-label="显示比例" />
      <Icon size={10}><path d="M0 5h10M5 0v10" strokeWidth="2" /></Icon>
      <GapBox $w={13} />
      <Icon size={16}><path d="M1.500 5V1.500H5M11 1.500h3.500V5M14.500 11v3.500H11M5 14.500H1.500V11M2 2l4 4M14 2l-4 4M2 14l4-4M14 14l-4-4" /></Icon>
    </StatusBar>
  );
}

export default function App() {
  return (
    <Window>
      <GlobalStyle />
      <Title />
      <Menu />
      <RibbonBar />
      <Workspace>
        <Document />
        <Scrollbar />
        <StylesPanel />
        <Rail>
          <Grip />
          {rail.map((r) => (
            <RailButton key={r.label} $active={r.active} aria-label={r.label}><Icon>{r.icon}</Icon></RailButton>
          ))}
          <RailMore aria-label="更多"><Icon size={16}><circle cx="2.500" cy="8" r="1.500" /><circle cx="8" cy="8" r="1.500" /><circle cx="13.500" cy="8" r="1.500" /></Icon></RailMore>
        </Rail>
      </Workspace>
      <Status />

      <Activation>
        <ActivationTitle>激活 Windows</ActivationTitle>
        转到“设置”以激活 Windows。
      </Activation>
      <SideBadge aria-label="助手">
        <Svg width="32" height="37" viewBox="0 0 32 37" aria-hidden>
          <path d="M40 .500H18C8 .500 .500 8 .500 17c0 11 8 19.500 18 19.500h22z" fill="#fde3da" stroke="#5c1414" />
          <path d="M40 5H20C12 5 5 10 5 18s7 14 15 14h20z" fill="#fff" stroke="none" />
          <circle cx="25" cy="18" r="8.500" fill="#fff" stroke="#5c1414" />
          <path d="M30 14a6 6 0 1 0 0 8" stroke="#f6a5a5" strokeWidth="3" />
          <path d="M31 16.500h-3c-2-2-5-1-5 1.500s3 3.500 5 1.500h3" stroke="#5c1414" />
        </Svg>
      </SideBadge>
      <NetBall aria-label="网速">
        <Svg width="42" height="42" viewBox="0 0 42 42" aria-hidden>
          <path d="M14.500 14V8M11.500 11l3-3.500 3 3.500" stroke="#3fb4f5" strokeWidth="1.600" />
          <path d="M14.500 28v6M11.500 31l3 3.500 3-3.500" stroke="#2fbf4f" strokeWidth="1.600" />
        </Svg>
      </NetBall>
      <SiteMark>
        <Svg width="44" height="42" viewBox="0 0 44 42" aria-hidden>
          <defs>
            <linearGradient id="swirlBlue" x1="0" y1="1" x2="1" y2="0"><stop offset="0" stopColor="#2d62b8" /><stop offset="1" stopColor="#35b4f0" /></linearGradient>
            <linearGradient id="swirlGreen" x1="0" y1="1" x2="1" y2="0"><stop offset="0" stopColor="#e8e04a" /><stop offset="1" stopColor="#2fb06a" /></linearGradient>
          </defs>
          <path d="M43 3C22 1 0 12 1 26c1 9 14 9 20 2 2-3 3-6 0-8 1 6-5 10-10 8C3 24 16 7 43 3z" fill="url(#swirlBlue)" stroke="none" />
          <path d="M20 18c9-5 20-2 21 4 1 9-17 20-34 17 12-1 24-8 26-14 1-5-6-7-13-7z" fill="url(#swirlGreen)" stroke="none" />
          <path d="M10 26c0-6 7-12 14-11-6 1-10 5-10 10 0 3 5 2 7-2-1 6-11 9-11 3z" fill="#4a7fd0" stroke="none" />
        </Svg>
        <div>
          <SiteName>极光下载站</SiteName>
          <SiteUrl>www.xz7.com</SiteUrl>
        </div>
      </SiteMark>
      <ArrowLayer width="560" height="260" viewBox="0 0 560 260" fill="none" aria-hidden>
        <Arrow tip={[188, 103]} tail={[235, 140]} />
        <Arrow tip={[173, 137]} tail={[150, 233]} />
        <Arrow tip={[310, 101]} tail={[318, 162]} />
        <Arrow tip={[512, 132]} tail={[460, 171]} />
        <Arrow tip={[500, 235]} tail={[415, 222]} />
      </ArrowLayer>
    </Window>
  );
}
